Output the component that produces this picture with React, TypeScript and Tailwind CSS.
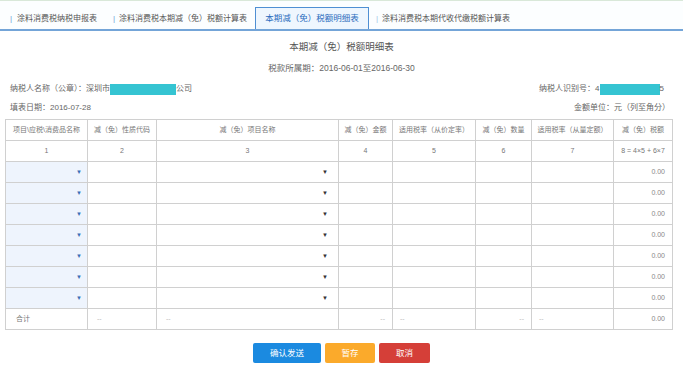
import React from "react";

const cols = [82, 69, 182, 54, 83, 56, 82, 59];

const heads = [
    "项目\\应税\\消费品名称",
    "减（免）性质代码",
    "减（免）项目名称",
    "减（免）金额",
    "适用税率（从价定率）",
    "减（免）数量",
    "适用税率（从量定额）",
    "减（免）税额",
];

const nums = ["1", "2", "3", "4", "5", "6", "7", "8 = 4×5 + 6×7"];

function Tri({ blue }: { blue?: boolean }) {
    return (
        <span className={`text-[6px] leading-none ${blue ? "text-[#3b6fb6]" : "text-[#333]"}`}>▼</span>
    );
}

export default function App() {
    const cell = "border border-[#d0d0d0] h-[21px] p-0 text-[7px] text-[#777] font-normal";
    return (
        <div className="w-[683px] h-[367px] bg-white font-['Liberation_Sans','Noto_Sans_CJK_SC',sans-serif] overflow-hidden">
            {/* tabs */}
            <div className="flex items-end h-[31px] border-t border-[#d9e8d9] border-b-2 border-b-[#74a5d8] pl-[8px] bg-[#fcfeff] text-[8px] text-[#555]">
                <div className="w-[102px] h-[21px] flex items-center pl-[2px] gap-[5px]">
                    <span className="text-[#6f9fd6]">|</span>
                    <span>涂料消费税纳税申报表</span>
                </div>
                <div className="w-[145px] h-[21px] flex items-center pl-[3px] gap-[4px]">
                    <span className="text-[#6f9fd6]">|</span>
                    <span>涂料消费税本期减（免）税额计算表</span>
                </div>
                <div className="w-[114px] h-[22px] flex items-center justify-center border border-b-0 border-[#4f8fd3] bg-[#eef6fe] text-[#2a6cbd] text-[8.5px]">
                    本期减（免）税额明细表
                </div>
                <div className="h-[21px] flex items-center pl-[7px] gap-[4px]">
                    <span className="text-[#9fc2e6]">|</span>
                    <span>涂料消费税本期代收代缴税额计算表</span>
                </div>
            </div>

            {/* title */}
            <div className="flex flex-col items-center pt-[9px] text-[#555]">
                <div className="text-[9.5px] leading-[14px]">本期减（免）税额明细表</div>
                <div className="text-[8.5px] leading-[14px] mt-[7px] text-[#666]">税款所属期：2016-06-01至2016-06-30</div>
            </div>

            <div className="flex justify-between items-center px-[10px] mt-[7px] h-[14px] text-[8px] text-[#666]">
                <div className="flex items-center">
                    <span>纳税人名称（公章）：深圳市</span>
                    <span className="w-[66px] h-[11px] bg-[#35c4d2]" />
                    <span>公司</span>
                </div>
                <div className="flex items-center pr-[9px]">
                    <span>纳税人识别号：4</span>
                    <span className="w-[60px] h-[11px] bg-[#35c4d2]" />
                    <span>5</span>
                </div>
            </div>
            <div className="flex justify-between items-center px-[10px] mt-[5px] h-[14px] text-[8px] text-[#666]">
                <span>填表日期：2016-07-28</span>
                <span className="pr-[3px]">金额单位：元（列至角分）</span>
            </div>

            {/* table */}
            <div className="px-[5px] mt-[4px]">
                <table className="table-fixed border-collapse w-[667px]">
                    <colgroup>
                        {cols.map((w, i) => (
                            <col key={i} style={{ width: w }} />
                        ))}
                    </colgroup>
                    <thead>
                        <tr>
                            {heads.map((h, i) => (
                                <th key={i} className={`${cell} h-[20px] text-center`}>{h}</th>
                            ))}
                        </tr>
                    </thead>
                    <tbody>
                        <tr>
                            {nums.map((n, i) => (
                                <td key={i} className={`${cell} text-center text-[7.5px]`}>{n}</td>
                            ))}
                        </tr>
                        {Array.from({ length: 7 }).map((_, r) => (
                            <tr key={r}>
                                <td className={`${cell} bg-[#eef4fd]`}>
                                    <div className="flex justify-end pr-[5px]"><Tri blue /></div>
                                </td>
                                <td className={cell} />
                                <td className={cell}>
                                    <div className="flex justify-end pr-[10px]"><Tri /></div>
                                </td>
                                <td className={cell} />
                                <td className={cell} />
                                <td className={cell} />
                                <td className={cell} />
                                <td className={`${cell} text-right pr-[7px] text-[7.5px] text-[#888]`}>0.00</td>
                            </tr>
                        ))}
                        <tr>
                            <td className={`${cell} pl-[10px]`}>合计</td>
                            <td className={`${cell} pl-[9px] text-[#bbb]`}>--</td>
                            <td className={`${cell} pl-[9px] text-[#bbb]`}>--</td>
                            <td className={`${cell} text-right pr-[7px] text-[#bbb]`}>--</td>
                            <td className={`${cell} pl-[7px] text-[#bbb]`}>--</td>
                            <td className={`${cell} text-right pr-[7px] text-[#bbb]`}>--</td>
                            <td className={`${cell} pl-[7px] text-[#bbb]`}>--</td>
                            <td className={`${cell} text-right pr-[7px] text-[7.5px] text-[#888]`}>0.00</td>
                        </tr>
                    </tbody>
                </table>
            </div>

            {/* buttons */}
            <div className="flex justify-center gap-[4px] mt-[13px] text-[8.5px] text-white">
                <button className="w-[68px] h-[20px] rounded-[2px] bg-[#1b8ae0]">确认发送</button>
                <button className="w-[50px] h-[20px] rounded-[2px] bg-[#fbaa2b]">暂存</button>
                <button className="w-[51px] h-[20px] rounded-[2px] bg-[#d53f38]">取消</button>
            </div>
        </div>
    );
}
